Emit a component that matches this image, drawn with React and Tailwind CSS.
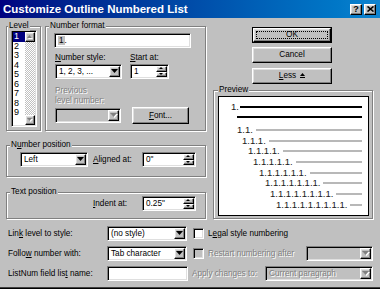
import React from 'react';

// win9x bevels
const raised =
  'bg-[#c0c0c0] border border-t-white border-l-white border-r-black border-b-black shadow-[inset_-1px_-1px_0_#808080,inset_1px_1px_0_#dfdfdf]';
const sunken =
  'border border-t-[#808080] border-l-[#808080] border-r-white border-b-white shadow-[inset_1px_1px_0_#000,inset_-1px_-1px_0_#dfdfdf]';
const etched = 'relative border border-[#808080] shadow-[1px_1px_0_#fff,inset_1px_1px_0_#fff]';
const dim = 'text-[#808080] [text-shadow:1px_1px_0_#fff]';

const U = ({ children }) => <span className="underline underline-offset-1">{children}</span>;

function Tri({ up, disabled, w = 7, h = 4 }) {
  const pts = up ? `0,${h} ${w},${h} ${w / 2},0` : `0,0 ${w},0 ${w / 2},${h}`;
  return (
    <svg width={w + 1} height={h + 1} viewBox={`0 0 ${w + 1} ${h + 1}`} className="overflow-visible">
      {disabled && <polygon points={pts} fill="#fff" transform="translate(1 1)" />}
      <polygon points={pts} fill={disabled ? '#808080' : '#000'} />
    </svg>
  );
}

function Combo({ value, disabled, className = '' }) {
  return (
    <div className={`${sunken} ${disabled ? 'bg-[#c0c0c0]' : 'bg-white'} flex items-stretch p-[1px] h-[15px] ${className}`}>
      <span className={`flex-1 pl-[2px] leading-[11px] whitespace-nowrap overflow-hidden ${disabled ? dim : ''}`}>{value}</span>
      <div className={`${raised} w-[11px] flex items-center justify-center`}>
        <Tri disabled={disabled} />
      </div>
    </div>
  );
}

function Spin({ value, className = '' }) {
  return (
    <div className={`${sunken} bg-white flex p-[1px] h-[15px] ${className}`}>
      <span className="flex-1 pl-[2px] leading-[11px]">{value}</span>
      <div className="w-[11px] flex flex-col">
        <div className={`${raised} flex-1 flex items-center justify-center`}>
          <Tri up w={4} h={2} />
        </div>
        <div className={`${raised} flex-1 flex items-center justify-center`}>
          <Tri w={4} h={2} />
        </div>
      </div>
    </div>
  );
}

function Check({ disabled, className = '' }) {
  return <div className={`${sunken} w-[11px] h-[11px] ${disabled ? 'bg-[#c0c0c0]' : 'bg-white'} ${className}`} />;
}

function Btn({ className = '', children }) {
  return <div className={`${raised} flex items-center justify-center ${className}`}>{children}</div>;
}

function Group({ label, className = '', labelClass = 'left-[3px]', children }) {
  return (
    <div className={`${etched} ${className}`}>
      <span className={`absolute -top-[6px] ${labelClass} bg-[#c0c0c0] px-[1px] leading-[10px] whitespace-nowrap`}>
        {label}
      </span>
      {children}
    </div>
  );
}

const levels = [1, 2, 3, 4, 5, 6, 7, 8, 9];
const previewRows = [
  { text: '1.1.', pad: 'pl-[18px]' },
  { text: '1.1.1.', pad: 'pl-[23px]' },
  { text: '1.1.1.1.', pad: 'pl-[29px]' },
  { text: '1.1.1.1.1.', pad: 'pl-[34px]' },
  { text: '1.1.1.1.1.1.', pad: 'pl-[40px]' },
  { text: '1.1.1.1.1.1.1.', pad: 'pl-[46px]' },
  { text: '1.1.1.1.1.1.1.1.', pad: 'pl-[51px]' },
  { text: '1.1.1.1.1.1.1.1.1.', pad: 'pl-[57px]' },
];

export default function App() {
  return (
    <div className="w-[380px] h-[289px] overflow-hidden bg-[#c0c0c0] text-black text-[8.2px] leading-[10px] font-['Liberation_Sans',Arial,sans-serif] flex flex-col shadow-[inset_0_-1px_0_#000,inset_0_-2px_0_#404040]">
      {/* Title bar */}
      <div className="h-[18px] shrink-0 flex items-center pl-[3px] pr-[4px] bg-linear-to-r from-[#000080] to-[#1084d0]">
        <span className="flex-1 font-bold text-[11.5px] leading-[14px] text-white whitespace-nowrap">
          Customize Outline Numbered List
        </span>
        <div className="flex gap-[2px]">
          <div className={`${raised} w-[12px] h-[11px] flex items-center justify-center font-bold text-[9px] leading-[9px]`}>
            ?
          </div>
          <div className={`${raised} w-[12px] h-[11px] flex items-center justify-center`}>
            <svg width="7" height="6" viewBox="0 0 7 6">
              <path d="M0.5 0.5 L6.5 5.5 M6.5 0.5 L0.5 5.5" stroke="#000" strokeWidth="1.6" />
            </svg>
          </div>
        </div>
      </div>

      {/* Top section */}
      <div className="flex pl-[6px]">
        <div className="w-[200px] flex flex-col">
          <div className="flex mt-[8px] gap-[4px]">
            <Group label="Level" className="w-[35px] h-[105px]" labelClass="left-[1px]">
              <div className={`${sunken} bg-white ml-[4px] mt-[3px] w-[26px] h-[97px] p-[1px] flex text-[9px]`}>
                <div className="w-[12px] flex flex-col">
                  {levels.map((n) => (
                    <div
                      key={n}
                      className={`h-[9.5px] leading-[9.5px] pl-[1px] ${n === 1 ? 'bg-[#000080] text-white' : ''}`}
                    >
                      {n}
                    </div>
                  ))}
                </div>
                <div className="w-[10px] flex flex-col">
                  <div className={`${raised} h-[10px] flex items-center justify-center`}>
                    <Tri up disabled w={5} h={3} />
                  </div>
                  <div className="flex-1 bg-[image:repeating-conic-gradient(#fff_0_25%,#c0c0c0_0_50%)] bg-[length:2px_2px]" />
                  <div className={`${raised} h-[10px] flex items-center justify-center`}>
                    <Tri disabled w={5} h={3} />
                  </div>
                </div>
              </div>
            </Group>

            <Group label="Number format" className="w-[161px] h-[105px]">
              <div className={`${sunken} bg-white ml-[8px] mt-[6px] w-[137px] h-[15px] p-[1px] flex items-center`}>
                <span className="ml-[2px] bg-[#c0c0c0] px-[1px] leading-[9px]">1</span>
                <span>.</span>
              </div>
              <div className="flex ml-[9px] mt-[5px] gap-[8px]">
                <div className="flex flex-col w-[67px]">
                  <span>
                    <U>N</U>umber style:
                  </span>
                  <Combo value="1, 2, 3, ..." className="mt-[1px]" />
                </div>
                <div className="flex flex-col w-[39px]">
                  <span>
                    <U>S</U>tart at:
                  </span>
                  <Spin value="1" className="mt-[1px]" />
                </div>
              </div>
              <div className={`ml-[9px] mt-[7px] ${dim}`}>
                Previous
                <br />
                level number:
              </div>
              <div className="flex items-center ml-[9px] mt-[1px]">
                <Combo disabled value="" className="w-[66px]" />
                <Btn className="ml-[11px] w-[57px] h-[17px]">
                  <U>F</U>ont...
                </Btn>
              </div>
            </Group>
          </div>

          <Group
            label={
              <>
                N<U>u</U>mber position
              </>
            }
            className="mt-[14px] h-[32px]"
          >
            <div className="flex items-center ml-[13px] mt-[6px]">
              <Combo value="Left" className="w-[68px]" />
              <span className="ml-[5px] w-[49px]">
                <U>A</U>ligned at:
              </span>
              <Spin value={'0"'} className="w-[54px]" />
            </div>
          </Group>

          <Group label="Text position" className="mt-[15px] h-[27px]">
            <div className="flex items-center ml-[86px] mt-[3px]">
              <span className="w-[49px]">
                <U>I</U>ndent at:
              </span>
              <Spin value={'0.25"'} className="w-[54px]" />
            </div>
          </Group>
        </div>

        <div className="ml-[7px] w-[160px] flex flex-col">
          <div className="ml-[39px] mt-[9px] w-[80px] flex flex-col">
            <div className="border border-black h-[16px] flex">
              <div className={`${raised} relative flex-1 flex items-center justify-center`}>
                <span className="absolute inset-[2px] border border-dotted border-black" />
                OK
              </div>
            </div>
            <Btn className="mt-[4px] h-[16px]">Cancel</Btn>
            <Btn className="mt-[5px] h-[16px] gap-[4px]">
              <span>
                <U>L</U>ess
              </span>
              <svg width="5" height="6" viewBox="0 0 5 6">
                <polygon points="0,3 5,3 2.5,0" fill="#000" />
                <rect x="0" y="4" width="5" height="1" fill="#000" />
              </svg>
            </Btn>
          </div>

          <Group label="Preview" className="mt-[6px] h-[129px]" labelClass="left-[4px]">
            <div className="ml-[4px] mt-[5px] w-[151px] h-[120px] bg-white border border-black text-[9.5px] text-[#202020] flex flex-col pr-[6px]">
              <div className="mt-[5px] h-[10px] flex items-center pl-[12px]">
                <span className="leading-[10px]">1.</span>
                <div className="flex-1 h-[2px] bg-black ml-[1px]" />
              </div>
              <div className="h-[10px] flex items-center pl-[18px]">
                <div className="flex-1 h-[2px] bg-black" />
              </div>
              <div className="mt-[2.6px] flex flex-col">
                {previewRows.map((r) => (
                  <div key={r.text} className={`h-[10.7px] flex items-center ${r.pad}`}>
                    <span className="leading-[10px] whitespace-nowrap">{r.text}</span>
                    <div className="flex-1 h-[2px] bg-[#b8b8b8] ml-[3px]" />
                  </div>
                ))}
              </div>
            </div>
          </Group>
        </div>
      </div>

      {/* Bottom rows */}
      <div className="mt-[7px] flex flex-col gap-[5px] pl-[8px] pr-[7px]">
        <div className="flex items-center h-[15px]">
          <span className="w-[99px] whitespace-nowrap">
            Lin<U>k</U> level to style:
          </span>
          <Combo value="(no style)" className="w-[80px]" />
          <Check className="ml-[6px]" />
          <span className="ml-[4px] whitespace-nowrap">
            L<U>e</U>gal style numbering
          </span>
        </div>
        <div className="flex items-center h-[15px]">
          <span className="w-[99px] whitespace-nowrap">
            Follo<U>w</U> number with:
          </span>
          <Combo value="Tab character" className="w-[80px]" />
          <Check disabled className="ml-[6px]" />
          <span className={`ml-[4px] whitespace-nowrap ${dim}`}>Restart numbering after</span>
          <Combo disabled value="" className="ml-auto w-[67px]" />
        </div>
        <div className="flex items-center h-[15px]">
          <span className="w-[99px] whitespace-nowrap">
            ListNum field lis<U>t</U> name:
          </span>
          <div className={`${sunken} bg-white w-[81px] h-[15px]`} />
          <span className={`ml-[4px] whitespace-nowrap ${dim}`}>Apply changes to:</span>
          <Combo disabled value="Current paragraph" className="ml-auto w-[108px]" />
        </div>
      </div>
    </div>
  );
}
